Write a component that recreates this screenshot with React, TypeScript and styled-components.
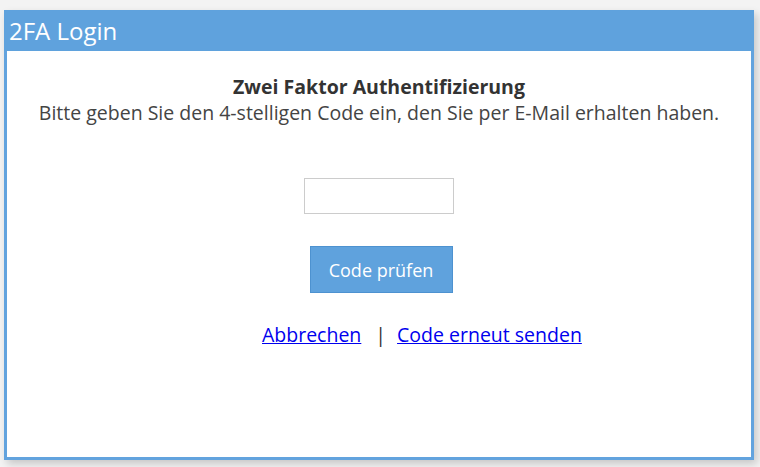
import React from "react";
import styled, { createGlobalStyle } from "styled-components";

const Global = createGlobalStyle`
  html, body { margin: 0; padding: 0; background: #f3f3f3; }
  body { font-family: "Open Sans", "Liberation Sans", sans-serif; }
`;

const Page = styled.div`
  padding: 10px 6px 7px 4px;
  height: 467px;
  box-sizing: border-box;
`;

const Card = styled.div`
  width: 750px;
  height: 450px;
  box-sizing: border-box;
  border: 3px solid #62a3de;
  border-top: none;
  background: #fff;
  box-shadow: 3px 4px 8px rgba(0, 0, 0, 0.18);
  display: flex;
  flex-direction: column;
`;

const Header = styled.div`
  height: 41px;
  margin: 0 -3px;
  padding: 0 5px;
  background: #5fa2dd;
  color: #fff;
  font-size: 24px;
  line-height: 41px;
  display: flex;
  align-items: center;
`;

const Body = styled.div`
  display: flex;
  flex-direction: column;
  align-items: center;
  padding-top: 23px;
  color: #333;
`;

const Title = styled.div`
  font-weight: 700;
  font-size: 19.5px;
  line-height: 26px;
`;

const Subtitle = styled.div`
  font-size: 19.5px;
  line-height: 26px;
  color: #444;
`;

const CodeInput = styled.input`
  margin-top: 52px;
  width: 150px;
  height: 36px;
  box-sizing: border-box;
  border: 1px solid #cccccc;
  outline: none;
`;

const Button = styled.button`
  margin: 32px 0 0 4px;
  width: 143px;
  height: 47px;
  background: #5fa2dd;
  border: 1px solid #4d92d0;
  color: #fff;
  font-family: inherit;
  font-size: 18px;
`;

const Links = styled.div`
  align-self: flex-start;
  margin: 28px 0 0 255px;
  display: flex;
  align-items: center;
  font-size: 19.5px;
  line-height: 28px;
  color: #333;
`;

const Link = styled.a`
  color: #0000ee;
  text-decoration: underline;
`;

const Sep = styled.span`
  margin: 0 11px 0 14px;
`;

export default function App() {
  return (
    <>
      <Global />
      <Page>
        <Card>
          <Header>2FA Login</Header>
          <Body>
            <Title>Zwei Faktor Authentifizierung</Title>
            <Subtitle>
              Bitte geben Sie den 4-stelligen Code ein, den Sie per E-Mail erhalten haben.
            </Subtitle>
            <CodeInput type="text" />
            <Button>Code prüfen</Button>
            <Links>
              <Link href="#">Abbrechen</Link>
              <Sep>|</Sep>
              <Link href="#">Code erneut senden</Link>
            </Links>
          </Body>
        </Card>
      </Page>
    </>
  );
}
